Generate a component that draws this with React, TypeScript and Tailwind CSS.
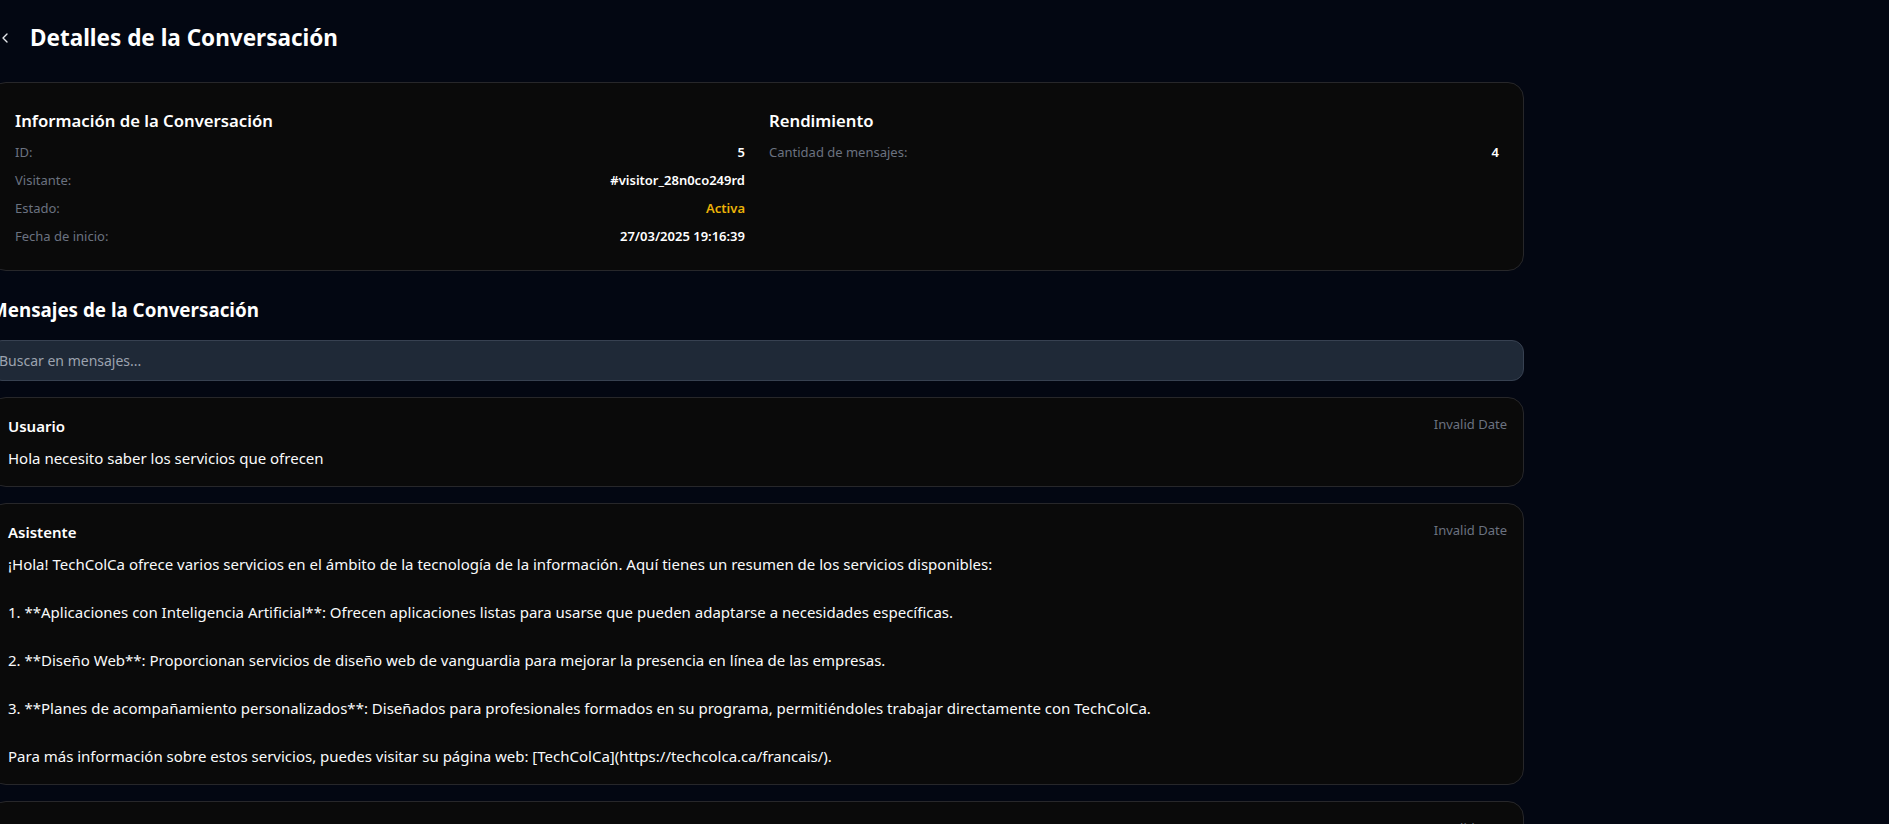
import React from "react";

const infoRows: { label: string; value: string; color?: string }[] = [
  { label: "ID:", value: "5" },
  { label: "Visitante:", value: "#visitor_28n0co249rd" },
  { label: "Estado:", value: "Activa", color: "text-[#eab308]" },
  { label: "Fecha de inicio:", value: "27/03/2025 19:16:39" },
];

const messages: { role: string; text: string }[] = [
  { role: "Usuario", text: "Hola necesito saber los servicios que ofrecen" },
  {
    role: "Asistente",
    text:
      "¡Hola! TechColCa ofrece varios servicios en el ámbito de la tecnología de la información. Aquí tienes un resumen de los servicios disponibles:\n\n1. **Aplicaciones con Inteligencia Artificial**: Ofrecen aplicaciones listas para usarse que pueden adaptarse a necesidades específicas.\n\n2. **Diseño Web**: Proporcionan servicios de diseño web de vanguardia para mejorar la presencia en línea de las empresas.\n\n3. **Planes de acompañamiento personalizados**: Diseñados para profesionales formados en su programa, permitiéndoles trabajar directamente con TechColCa.\n\nPara más información sobre estos servicios, puedes visitar su página web: [TechColCa](https://techcolca.ca/francais/).",
  },
  { role: "Usuario", text: "Gracias por la información" },
  { role: "Asistente", text: "¡De nada! Si tienes alguna otra pregunta, no dudes en consultarnos." },
];

function ChevronLeft() {
  return (
    <svg width="16" height="16" viewBox="0 0 24 24" fill="none" stroke="#e5e7eb" strokeWidth="2" strokeLinecap="round" strokeLinejoin="round">
      <path d="m15 18-6-6 6-6" />
    </svg>
  );
}

export default function App() {
  return (
    <div
      className="h-screen w-full overflow-hidden bg-[#030712] text-white"
      style={{ fontFamily: '"Noto Sans", "Open Sans", sans-serif' }}
    >
      <div className="ml-[-10px] w-[1534px]">
        {/* Header */}
        <div className="flex items-center pt-[22px]">
          <button className="ml-[7px] flex h-4 w-4 items-center justify-center">
            <ChevronLeft />
          </button>
          <h1 className="ml-[17px] text-[22.5px] font-bold leading-8 text-white">Detalles de la Conversación</h1>
        </div>

        {/* Info card */}
        <div className="mt-7 rounded-2xl border border-[#27272a] bg-[#0a0a0a] p-6">
          <div className="grid grid-cols-2 gap-6">
            <div>
              <h2 className="mb-[7px] text-[16.7px] font-semibold leading-7 text-white">Información de la Conversación</h2>
              <div className="flex flex-col gap-2">
                {infoRows.map((r) => (
                  <div key={r.label} className="flex items-center justify-between text-[13px] leading-5">
                    <span className="text-[#6b7280]">{r.label}</span>
                    <span className={`font-semibold ${r.color ?? "text-white"}`}>{r.value}</span>
                  </div>
                ))}
              </div>
            </div>
            <div>
              <h2 className="mb-[7px] text-[16.7px] font-semibold leading-7 text-white">Rendimiento</h2>
              <div className="flex items-center justify-between text-[13px] leading-5">
                <span className="text-[#6b7280]">Cantidad de mensajes:</span>
                <span className="font-semibold text-white">4</span>
              </div>
            </div>
          </div>
        </div>

        {/* Messages */}
        <h2 className="mt-[25px] text-[18.8px] font-bold leading-7 text-white">Mensajes de la Conversación</h2>
        <input
          className="mt-4 h-[41px] w-full rounded-xl border border-[#374151] bg-[#1f2937] px-[8px] text-[14px] text-white placeholder-[#9ca3af] outline-none"
          placeholder="Buscar en mensajes..."
        />
        <div className="mt-4 flex flex-col gap-4">
          {messages.map((m, i) => (
            <div key={i} className="rounded-2xl border border-[#27272a] bg-[#0a0a0a] py-4 pl-[17px] pr-4">
              <div className="mb-2 flex items-start justify-between">
                <span className="text-[15px] font-semibold leading-6 text-white">{m.role}</span>
                <span className="text-[13px] leading-5 text-[#6b7280]">Invalid Date</span>
              </div>
              <p className="whitespace-pre-wrap text-[15px] leading-6 text-[#f9fafb]">{m.text}</p>
            </div>
          ))}
        </div>
      </div>
    </div>
  );
}
